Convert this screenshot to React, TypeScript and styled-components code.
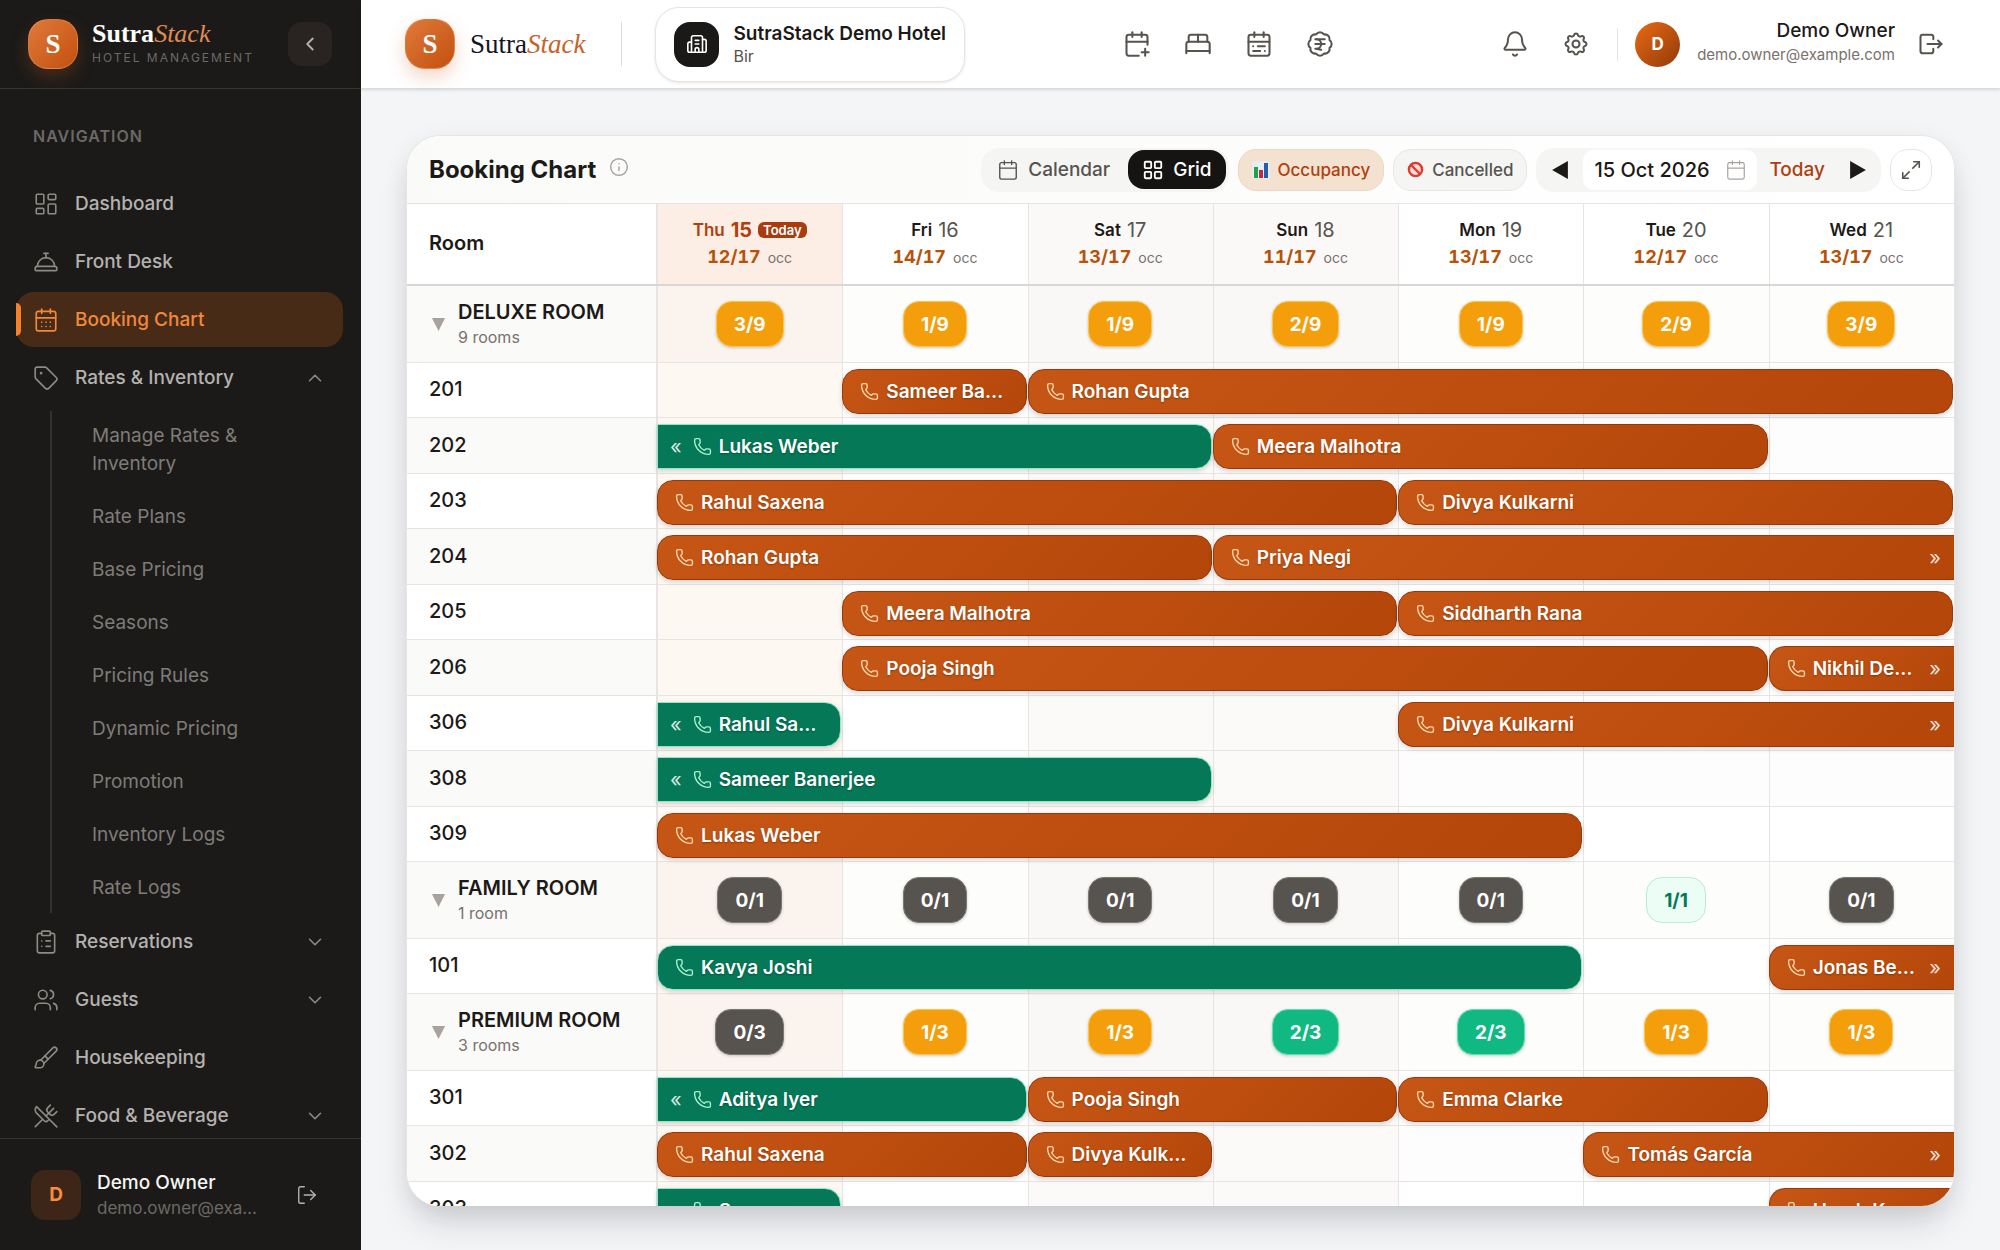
import React from "react";
import styled, { createGlobalStyle, css } from "styled-components";
import {
  BadgeIndianRupee,
  BedDouble,
  Bell,
  Brush,
  Building2,
  Calendar,
  CalendarDays,
  CalendarPlus,
  CalendarRange,
  ChevronDown,
  ChevronLeft,
  ChevronUp,
  ClipboardList,
  ConciergeBell,
  Info,
  LayoutDashboard,
  LayoutGrid,
  LogOut,
  Maximize2,
  Phone,
  Tag,
  Users,
  UtensilsCrossed,
} from "lucide-react";
import { TbLogout, TbSettings } from "react-icons/tb";

const color = {
  ink: "#1b1a18",
  text: "#1c1917",
  mid: "#57534e",
  soft: "#78716c",
  faint: "#a8a29e",
  line: "#e7e5e4",
  wash: "#f5f5f4",
  paper: "#fafaf9",
  rust: "#b0400f",
};

const GlobalStyle = createGlobalStyle`
  *, *::before, *::after { box-sizing: border-box; }
  body {
    margin: 0;
    font-family: Inter, "Liberation Sans", sans-serif;
    font-size: 20px;
    color: ${color.text};
    -webkit-font-smoothing: antialiased;
  }
  button, input { font: inherit; color: inherit; }
  button { border: 0; padding: 0; background: none; cursor: pointer; }
  a { color: inherit; text-decoration: none; }
  svg { flex: none; display: block; }
`;

const Shell = styled.div`
  display: flex;
  height: 100vh;
  overflow: hidden;
`;

/* ---------- sidebar ---------- */

const Sidebar = styled.aside`
  flex: none;
  width: 361px;
  display: flex;
  flex-direction: column;
  background: ${color.ink};
  color: #b4b2af;
`;

const SideHead = styled.div`
  flex: none;
  height: 89px;
  display: flex;
  align-items: center;
  gap: 14px;
  padding: 0 29px 0 28px;
  border-bottom: 1px solid #363532;
`;

const LogoMark = styled.span`
  flex: none;
  width: 50px;
  height: 50px;
  display: grid;
  place-items: center;
  border-radius: 20px;
  border: 1px solid rgba(255, 200, 150, 0.25);
  background: linear-gradient(135deg, #e07a3a, #c2500f);
  box-shadow: 0 8px 18px rgba(210, 90, 30, 0.25);
  color: #fff;
  font: bold 27px "Liberation Serif", serif;
`;

const Wordmark = styled.span<{ $dark?: boolean }>`
  font-family: "Liberation Serif", serif;
  font-size: ${(p) => (p.$dark ? 26 : 27)}px;
  font-weight: ${(p) => (p.$dark ? 700 : 400)};
  line-height: 28px;
  color: ${(p) => (p.$dark ? "#fff" : "#14141f")};
  em {
    font-weight: 400;
    color: ${(p) => (p.$dark ? "#e08a55" : "#c8622a")};
  }
`;

const BrandText = styled.div`
  flex: 1;
  display: flex;
  flex-direction: column;
  white-space: nowrap;
`;

const Tagline = styled.span`
  font-size: 12px;
  line-height: 20px;
  letter-spacing: 2px;
  color: #6b6966;
`;

const CollapseButton = styled.button`
  width: 44px;
  height: 44px;
  display: grid;
  place-items: center;
  border-radius: 14px;
  background: #292421;
  color: #b4b2af;
`;

const SideNav = styled.nav`
  flex: 1;
  min-height: 0;
  overflow: hidden;
  display: flex;
  flex-direction: column;
  gap: 3px;
  padding: 35px 18px 0 16px;
`;

const NavHeading = styled.h2`
  flex: none;
  margin: 0 0 25px;
  padding: 0 17px;
  font-size: 16px;
  line-height: 24px;
  font-weight: 600;
  letter-spacing: 1px;
  color: #6b6966;
`;

const NavLink = styled.a<{ $active?: boolean }>`
  flex: none;
  position: relative;
  height: 55px;
  display: flex;
  align-items: center;
  gap: 16px;
  padding: 0 17px;
  border-radius: 18px;
  font-size: 19px;
  font-weight: 500;
  svg {
    color: #8d8a86;
  }
  ${(p) =>
    p.$active &&
    css`
      background: #482b16;
      color: #f0883e;
      svg {
        color: #f0883e;
      }
      &::before {
        content: "";
        position: absolute;
        left: 0;
        top: 11px;
        width: 5px;
        height: 33px;
        border-radius: 0 5px 5px 0;
        background: #f5822a;
      }
    `}
`;

const NavText = styled.span`
  flex: 1;
`;

const SubNav = styled.div`
  flex: none;
  display: flex;
  flex-direction: column;
  gap: 3px;
  margin: 3px 0 -2px 34px;
  padding-left: 24px;
  border-left: 2px solid #33312f;
`;

const SubLink = styled.a`
  padding: 11px 60px 11px 16px;
  font-size: 19px;
  line-height: 28px;
  color: #7f7c78;
`;

const SideFoot = styled.div`
  flex: none;
  height: 112px;
  display: flex;
  align-items: center;
  gap: 16px;
  padding: 0 43px 0 31px;
  border-top: 1px solid #363532;
`;

const FootAvatar = styled.span`
  flex: none;
  width: 50px;
  height: 50px;
  display: grid;
  place-items: center;
  border-radius: 14px;
  background: #3d2517;
  color: #fb8c3c;
  font-size: 19px;
  font-weight: 700;
`;

const FootText = styled.div`
  flex: 1;
  min-width: 0;
  display: flex;
  flex-direction: column;
  color: #f5f5f4;
  font-size: 19px;
  font-weight: 500;
  line-height: 26px;
`;

const FootEmail = styled.span`
  max-width: 163px;
  font-size: 17px;
  line-height: 24px;
  font-weight: 400;
  color: #6b6966;
  overflow: hidden;
  text-overflow: ellipsis;
`;

const IconButton = styled.button`
  display: grid;
  place-items: center;
`;

/* ---------- top bar ---------- */

const Main = styled.main`
  flex: 1;
  min-width: 0;
  display: flex;
  flex-direction: column;
  background: linear-gradient(135deg, #f3f5f7, #f4f5f7);
`;

const TopBar = styled.header`
  flex: none;
  height: 89px;
  display: grid;
  grid-template-columns: auto 1fr auto;
  align-items: center;
  padding: 0 55px 0 44px;
  background: #fff;
  border-bottom: 1px solid #dcdcdc;
  box-shadow: 0 1px 3px rgba(0, 0, 0, 0.12);
`;

const TopGroup = styled.div`
  display: flex;
  align-items: center;
  white-space: nowrap;
`;

const TopBrand = styled.a`
  display: flex;
  align-items: center;
  gap: 15px;
`;

const Divider = styled.span`
  width: 1px;
  height: 44px;
  margin: 0 33px 0 36px;
  background: #dedcda;
`;

const PropertyButton = styled.button`
  height: 75px;
  display: flex;
  align-items: center;
  gap: 14px;
  padding: 0 18px;
  border: 1px solid ${color.line};
  border-radius: 24px;
  background: #fff;
  box-shadow: 0 1px 3px rgba(0, 0, 0, 0.1);
  text-align: left;
`;

const PropertyIcon = styled.span`
  width: 45px;
  height: 45px;
  display: grid;
  place-items: center;
  border-radius: 16px;
  background: #1a1918;
  color: #fff;
`;

const PropertyText = styled.span`
  display: flex;
  flex-direction: column;
  font-size: 19px;
  font-weight: 600;
  line-height: 24px;
  small {
    font-size: 16px;
    line-height: 20px;
    font-weight: 400;
    color: ${color.mid};
  }
`;

const QuickActions = styled.div`
  display: flex;
  justify-content: center;
  gap: 33px;
  padding-right: 10px;
  color: ${color.mid};
`;

const Utility = styled.div`
  display: flex;
  gap: 33px;
  color: ${color.mid};
  padding-right: 27px;
  border-right: 1px solid ${color.line};
  height: 33px;
  align-items: center;
`;

const UserAvatar = styled.span`
  width: 45px;
  height: 45px;
  margin: 0 17px;
  display: grid;
  place-items: center;
  border-radius: 50%;
  background: linear-gradient(135deg, #ea6a12, #8f3a0c);
  color: #fff;
  font-size: 17px;
  font-weight: 700;
`;

const UserText = styled.div`
  display: flex;
  flex-direction: column;
  margin-right: 22px;
  text-align: right;
  font-size: 19px;
  font-weight: 500;
  line-height: 26px;
  padding-bottom: 4px;
  small {
    font-size: 15px;
    line-height: 22px;
    font-weight: 400;
    color: ${color.soft};
  }
`;

/* ---------- chart card ---------- */

const Content = styled.div`
  flex: 1;
  min-height: 0;
  display: flex;
  padding: 46px 45px 44px;
`;

const Card = styled.section`
  flex: 1;
  min-width: 0;
  overflow: hidden;
  display: flex;
  flex-direction: column;
  border: 1px solid ${color.line};
  border-bottom: 0;
  border-radius: 34px;
  background: #fff;
  box-shadow: 0 22px 34px -8px rgba(30, 30, 40, 0.18), 0 4px 24px rgba(30, 30, 40, 0.06);
`;

const CardHead = styled.div`
  flex: none;
  height: 68px;
  display: flex;
  align-items: center;
  gap: 9px;
  padding: 0 22px;
  border-bottom: 1px solid ${color.line};
  background: linear-gradient(90deg, ${color.paper}, #fff);
`;

const Title = styled.h1`
  margin: 0;
  font-size: 24px;
  font-weight: 700;
  line-height: 32px;
`;

const TitleInfo = styled.span`
  flex: 1;
  padding: 0 0 6px 4px;
  color: ${color.faint};
`;

const Segment = styled.div`
  height: 44px;
  display: flex;
  align-items: center;
  gap: 4px;
  padding: 0 3px 0 2px;
  border-radius: 18px;
  background: ${color.wash};
`;

const SegmentButton = styled.button<{ $on?: boolean }>`
  height: 39px;
  display: flex;
  align-items: center;
  gap: 9px;
  padding: 0 14px;
  border-radius: 16px;
  font-weight: 500;
  font-size: 19px;
  color: ${(p) => (p.$on ? "#fff" : color.mid)};
  background: ${(p) => (p.$on ? "#151413" : "transparent")};
`;

const Chip = styled.button<{ $on?: boolean }>`
  height: 42px;
  display: flex;
  align-items: center;
  gap: 8px;
  padding: 0 13px;
  border-radius: 18px;
  border: 1px solid ${(p) => (p.$on ? "#ecd8c2" : color.line)};
  background: ${(p) => (p.$on ? "#f4e2d0" : color.wash)};
  color: ${(p) => (p.$on ? color.rust : color.mid)};
  font-size: 17px;
  font-weight: 500;
`;

const DateNav = styled.div`
  height: 44px;
  display: flex;
  align-items: center;
  border-radius: 18px;
  background: ${color.wash};
`;

const StepButton = styled.button`
  width: 47px;
  height: 40px;
  display: grid;
  place-items: center;
`;

const DateField = styled.label`
  height: 40px;
  display: flex;
  align-items: center;
  gap: 11px;
  padding: 0 10px 0 11px;
  border-radius: 10px;
  background: #fff;
  color: ${color.faint};
`;

const DateInput = styled.input`
  width: 120px;
  border: 0;
  padding: 0;
  outline: 0;
  background: none;
  font-size: 20px;
  font-weight: 500;
  color: ${color.text};
`;

const TodayButton = styled.button`
  height: 40px;
  padding: 0 9px 0 12px;
  font-size: 19px;
  font-weight: 500;
  color: ${color.rust};
`;

const ExpandButton = styled.button`
  width: 42px;
  height: 42px;
  display: grid;
  place-items: center;
  border: 1px solid ${color.line};
  border-radius: 18px;
  background: #fff;
  color: ${color.mid};
`;

/* ---------- grid ---------- */

const TableWrap = styled.div`
  flex: 1;
  min-height: 0;
  overflow: hidden;
`;

const Table = styled.table`
  width: 100%;
  table-layout: fixed;
  border-collapse: separate;
  border-spacing: 0;
`;

type Tone = "today" | "weekend" | "plain";

const headTone: Record<Tone, string> = { today: "#fceee4", weekend: "#faf9f8", plain: "#fff" };
const groupTone: Record<Tone, string> = { today: "#fbf3ee", weekend: "#f9f8f7", plain: "#fdfdfc" };
const roomTone: Record<Tone, string> = { today: "#fdf8f2", weekend: "#fbfaf9", plain: "#fff" };

const RoomHead = styled.th`
  width: 250px;
  height: 82px;
  padding: 0 22px 2px;
  text-align: left;
  font-size: 20px;
  font-weight: 600;
  border-bottom: 2px solid #d9d7d4;
  box-shadow: inset -1px 0 ${color.line};
`;

const DayHead = styled.th<{ $tone: Tone }>`
  padding: 1px 0 0;
  font-weight: 400;
  border-bottom: 2px solid #d9d7d4;
  background: ${(p) => headTone[p.$tone]};
  box-shadow: inset 1px 0 ${color.line};
`;

const DayLine = styled.div<{ $today?: boolean }>`
  display: flex;
  align-items: center;
  justify-content: center;
  gap: 6px;
  line-height: 26px;
  color: ${(p) => (p.$today ? color.rust : color.mid)};
  font-weight: ${(p) => (p.$today ? 700 : 400)};
  b {
    font-size: 17px;
    font-weight: 600;
    color: ${(p) => (p.$today ? color.rust : color.text)};
  }
`;

const TodayTag = styled.span`
  padding: 0 5px;
  border-radius: 6px;
  background: #a83c0f;
  color: #fff;
  font-size: 13px;
  line-height: 16px;
  font-weight: 600;
`;

const OccLine = styled.div`
  display: flex;
  align-items: baseline;
  justify-content: center;
  gap: 7px;
  line-height: 28px;
  font-size: 18px;
  font-weight: 700;
  font-variant-numeric: tabular-nums;
  color: #b45309;
  small {
    font-size: 14px;
    font-weight: 400;
    color: ${color.soft};
  }
`;

const GroupHead = styled.th`
  height: 77px;
  padding: 0 24px;
  text-align: left;
  background: ${color.paper};
  border-bottom: 1px solid ${color.line};
  box-shadow: inset -1px 0 ${color.line};
`;

const GroupToggle = styled.button`
  display: flex;
  align-items: center;
  gap: 12px;
  text-align: left;
`;

const GroupText = styled.span`
  display: flex;
  flex-direction: column;
  font-size: 20px;
  line-height: 26px;
  font-weight: 600;
  small {
    font-size: 16px;
    line-height: 24px;
    font-weight: 400;
    color: ${color.soft};
  }
`;

const GroupCell = styled.td<{ $tone: Tone }>`
  padding: 0;
  background: ${(p) => groupTone[p.$tone]};
  border-bottom: 1px solid ${color.line};
  box-shadow: inset 1px 0 ${color.line};
`;

type Level = "low" | "none" | "good" | "full";

const levels: Record<Level, { bg: string; edge: string; ink: string }> = {
  low: { bg: "#f59e0b", edge: "#fcc64a", ink: "#fff" },
  none: { bg: "#57534e", edge: "#7c7873", ink: "#fff" },
  good: { bg: "#10b981", edge: "#5fe0b0", ink: "#fff" },
  full: { bg: "#ecfdf5", edge: "#b5efd5", ink: "#047857" },
};

const Pill = styled.span<{ $level: Level }>`
  width: fit-content;
  height: 46px;
  display: flex;
  align-items: center;
  margin: 0 auto;
  padding: 0 17px;
  border-radius: 16px;
  border: 1px solid ${(p) => levels[p.$level].edge};
  background: ${(p) => levels[p.$level].bg};
  color: ${(p) => levels[p.$level].ink};
  box-shadow: 0 1px 3px rgba(0, 0, 0, ${(p) => (p.$level === "full" ? 0 : 0.2)});
  font-size: 19px;
  font-weight: 700;
`;

const RoomRow = styled.tr<{ $alt: boolean }>`
  height: ${(p) => (p.$alt ? 56 : 55)}px;
`;

const RoomCell = styled.th<{ $alt: boolean }>`
  padding: 0 22px 2px;
  text-align: left;
  font-size: 20px;
  font-weight: 500;
  background: ${(p) => (p.$alt ? color.paper : "#fff")};
  border-bottom: 1px solid ${color.line};
  box-shadow: inset -1px 0 ${color.line};
`;

const DayCell = styled.td<{ $tone: Tone; $alt: boolean }>`
  position: relative;
  padding: 0;
  background: ${(p) => (p.$alt && p.$tone === "plain" ? "#fdfdfd" : roomTone[p.$tone])};
  border-bottom: 1px solid ${color.line};
  box-shadow: inset 1px 0 ${color.line};
`;

type Look = { $span: number; $green: boolean; $fromBefore: boolean; $goesOn: boolean };

const Bar = styled.button<Look>`
  position: absolute;
  z-index: 1;
  top: 6px;
  left: 0;
  width: calc(${(p) => p.$span * 100}% - ${(p) => (p.$goesOn ? 0 : 1)}px);
  height: 45px;
  display: flex;
  align-items: center;
  gap: 7px;
  padding: 0 ${(p) => (p.$goesOn ? 13 : 18)}px 0 ${(p) => (p.$fromBefore ? 12 : 17)}px;
  border: 1px solid ${(p) => (p.$green ? "#8fe8c4" : "#96390c")};
  border-radius: ${(p) => {
    const l = p.$fromBefore ? 0 : 16;
    const r = p.$goesOn ? 0 : 16;
    return `${l}px ${r}px ${r}px ${l}px`;
  }};
  ${(p) => p.$goesOn && "border-right: 0;"}
  background: ${(p) =>
    p.$green ? "linear-gradient(135deg, #047857, #047857)" : "linear-gradient(135deg, #c65615, #b4460a)"};
  box-shadow: 0 2px 5px rgba(0, 0, 0, 0.16);
  color: ${(p) => (p.$green ? "#a7f3d0" : "#fed7aa")};
  text-align: left;
`;

const Guest = styled.span`
  flex: 1;
  min-width: 0;
  overflow: hidden;
  text-overflow: ellipsis;
  white-space: nowrap;
  font-size: 19px;
  line-height: 26px;
  font-weight: 600;
  color: #fff;
  text-shadow: 0 1px 2px rgba(0, 0, 0, 0.3);
`;

const More = styled.span<{ $before?: boolean }>`
  font-size: 20px;
  line-height: 24px;
  padding-right: ${(p) => (p.$before ? 4 : 0)}px;
  color: rgba(255, 255, 255, 0.85);
`;

/* ---------- data ---------- */

const days: { name: string; date: number; occ: string; tone: Tone }[] = [
  { name: "Thu", date: 15, occ: "12/17", tone: "today" },
  { name: "Fri", date: 16, occ: "14/17", tone: "plain" },
  { name: "Sat", date: 17, occ: "13/17", tone: "weekend" },
  { name: "Sun", date: 18, occ: "11/17", tone: "weekend" },
  { name: "Mon", date: 19, occ: "13/17", tone: "plain" },
  { name: "Tue", date: 20, occ: "12/17", tone: "plain" },
  { name: "Wed", date: 21, occ: "13/17", tone: "plain" },
];

type Booking = { guest: string; day: number; nights: number; staying?: boolean; before?: boolean; after?: boolean };
type Room = { no: string; bookings: Booking[] };
type Group = { name: string; count: string; free: [string, Level][]; rooms: Room[] };

const groups: Group[] = [
  {
    name: "DELUXE ROOM",
    count: "9 rooms",
    free: [["3/9", "low"], ["1/9", "low"], ["1/9", "low"], ["2/9", "low"], ["1/9", "low"], ["2/9", "low"], ["3/9", "low"]],
    rooms: [
      { no: "201", bookings: [{ guest: "Sameer Banerjee", day: 1, nights: 1 }, { guest: "Rohan Gupta", day: 2, nights: 5 }] },
      {
        no: "202",
        bookings: [
          { guest: "Lukas Weber", day: 0, nights: 3, staying: true, before: true },
          { guest: "Meera Malhotra", day: 3, nights: 3 },
        ],
      },
      { no: "203", bookings: [{ guest: "Rahul Saxena", day: 0, nights: 4 }, { guest: "Divya Kulkarni", day: 4, nights: 3 }] },
      { no: "204", bookings: [{ guest: "Rohan Gupta", day: 0, nights: 3 }, { guest: "Priya Negi", day: 3, nights: 4, after: true }] },
      { no: "205", bookings: [{ guest: "Meera Malhotra", day: 1, nights: 3 }, { guest: "Siddharth Rana", day: 4, nights: 3 }] },
      { no: "206", bookings: [{ guest: "Pooja Singh", day: 1, nights: 5 }, { guest: "Nikhil Deshpande", day: 6, nights: 1, after: true }] },
      {
        no: "306",
        bookings: [
          { guest: "Rahul Saxena", day: 0, nights: 1, staying: true, before: true },
          { guest: "Divya Kulkarni", day: 4, nights: 3, after: true },
        ],
      },
      { no: "308", bookings: [{ guest: "Sameer Banerjee", day: 0, nights: 3, staying: true, before: true }] },
      { no: "309", bookings: [{ guest: "Lukas Weber", day: 0, nights: 5 }] },
    ],
  },
  {
    name: "FAMILY ROOM",
    count: "1 room",
    free: [["0/1", "none"], ["0/1", "none"], ["0/1", "none"], ["0/1", "none"], ["0/1", "none"], ["1/1", "full"], ["0/1", "none"]],
    rooms: [
      {
        no: "101",
        bookings: [
          { guest: "Kavya Joshi", day: 0, nights: 5, staying: true },
          { guest: "Jonas Becker", day: 6, nights: 1, after: true },
        ],
      },
    ],
  },
  {
    name: "PREMIUM ROOM",
    count: "3 rooms",
    free: [["0/3", "none"], ["1/3", "low"], ["1/3", "low"], ["2/3", "good"], ["2/3", "good"], ["1/3", "low"], ["1/3", "low"]],
    rooms: [
      {
        no: "301",
        bookings: [
          { guest: "Aditya Iyer", day: 0, nights: 2, staying: true, before: true },
          { guest: "Pooja Singh", day: 2, nights: 2 },
          { guest: "Emma Clarke", day: 4, nights: 2 },
        ],
      },
      {
        no: "302",
        bookings: [
          { guest: "Rahul Saxena", day: 0, nights: 2 },
          { guest: "Divya Kulkarni", day: 2, nights: 1 },
          { guest: "Tomás García", day: 5, nights: 2, after: true },
        ],
      },
      {
        no: "303",
        bookings: [
          { guest: "Sameer Banerjee", day: 0, nights: 1, staying: true, before: true },
          { guest: "Harsh Kapoor", day: 6, nights: 1, after: true },
        ],
      },
    ],
  },
];

const rateLinks = [
  "Manage Rates & Inventory",
  "Rate Plans",
  "Base Pricing",
  "Seasons",
  "Pricing Rules",
  "Dynamic Pricing",
  "Promotion",
  "Inventory Logs",
  "Rate Logs",
];

/* ---------- drawings ---------- */

const BarsGlyph = () => (
  <svg width="18" height="18" viewBox="0 0 18 18" aria-hidden="true">
    <rect x="0.5" y="0.5" width="17" height="17" rx="1" fill="#e6eef5" />
    <rect x="2" y="6" width="4" height="11" fill="#1fa34a" />
    <rect x="7" y="9" width="4" height="8" fill="#c6264a" />
    <rect x="12" y="2" width="4" height="15" fill="#1f5fae" />
  </svg>
);

const BannedGlyph = () => (
  <svg width="17" height="17" viewBox="0 0 17 17" fill="none" stroke="#de3b2e" strokeWidth="2.4" aria-hidden="true">
    <circle cx="8.5" cy="8.5" r="6.6" fill="#f6dcd8" />
    <path d="M4 4l9 9" />
  </svg>
);

const Triangle = ({ points, size = 15, fill = "#1c1917" }: { points: string; size?: number; fill?: string }) => (
  <svg width={size} height={size} viewBox="0 0 14 16" aria-hidden="true">
    <polygon points={points} fill={fill} />
  </svg>
);

/* ---------- parts ---------- */

type IconType = React.ComponentType<{ size?: number; strokeWidth?: number }>;

const NavItem = ({ icon: Icon, text, active, fold }: { icon: IconType; text: string; active?: boolean; fold?: "up" | "down" }) => (
  <NavLink href="#" $active={active} aria-current={active ? "page" : undefined}>
    <Icon size={26} strokeWidth={1.5} />
    <NavText>{text}</NavText>
    {fold === "up" && <ChevronUp size={22} strokeWidth={1.75} />}
    {fold === "down" && <ChevronDown size={22} strokeWidth={1.75} />}
  </NavLink>
);

const BookingBar = ({ b }: { b: Booking }) => (
  <Bar $span={b.nights} $green={!!b.staying} $fromBefore={!!b.before} $goesOn={!!b.after}>
    {b.before && <More $before>«</More>}
    <Phone size={19} strokeWidth={1.75} />
    <Guest>{b.guest}</Guest>
    {b.after && <More>»</More>}
  </Bar>
);

export default function App() {
  return (
    <Shell>
      <GlobalStyle />
      <Sidebar>
        <SideHead>
          <LogoMark>S</LogoMark>
          <BrandText>
            <Wordmark $dark>
              Sutra<em>Stack</em>
            </Wordmark>
            <Tagline>HOTEL MANAGEMENT</Tagline>
          </BrandText>
          <CollapseButton aria-label="Collapse sidebar">
            <ChevronLeft size={22} strokeWidth={2} />
          </CollapseButton>
        </SideHead>
        <SideNav>
          <NavHeading>NAVIGATION</NavHeading>
          <NavItem icon={LayoutDashboard} text="Dashboard" />
          <NavItem icon={ConciergeBell} text="Front Desk" />
          <NavItem icon={CalendarDays} text="Booking Chart" active />
          <NavItem icon={Tag} text="Rates & Inventory" fold="up" />
          <SubNav>
            {rateLinks.map((t) => (
              <SubLink key={t} href="#">
                {t}
              </SubLink>
            ))}
          </SubNav>
          <NavItem icon={ClipboardList} text="Reservations" fold="down" />
          <NavItem icon={Users} text="Guests" fold="down" />
          <NavItem icon={Brush} text="Housekeeping" />
          <NavItem icon={UtensilsCrossed} text="Food & Beverage" fold="down" />
        </SideNav>
        <SideFoot>
          <FootAvatar>D</FootAvatar>
          <FootText>
            Demo Owner
            <FootEmail>demo.owner@example.com</FootEmail>
          </FootText>
          <IconButton aria-label="Log out">
            <LogOut size={22} strokeWidth={1.5} />
          </IconButton>
        </SideFoot>
      </Sidebar>

      <Main>
        <TopBar>
          <TopGroup>
            <TopBrand href="#">
              <LogoMark>S</LogoMark>
              <Wordmark>
                Sutra<em>Stack</em>
              </Wordmark>
            </TopBrand>
            <Divider />
            <PropertyButton>
              <PropertyIcon>
                <Building2 size={22} strokeWidth={1.75} />
              </PropertyIcon>
              <PropertyText>
                SutraStack Demo Hotel
                <small>Bir</small>
              </PropertyText>
            </PropertyButton>
          </TopGroup>
          <QuickActions>
            <IconButton aria-label="New booking">
              <CalendarPlus size={28} strokeWidth={1.75} />
            </IconButton>
            <IconButton aria-label="Rooms">
              <BedDouble size={28} strokeWidth={1.75} />
            </IconButton>
            <IconButton aria-label="Booking chart">
              <CalendarRange size={28} strokeWidth={1.75} />
            </IconButton>
            <IconButton aria-label="Rates">
              <BadgeIndianRupee size={28} strokeWidth={1.75} />
            </IconButton>
          </QuickActions>
          <TopGroup>
            <Utility>
              <IconButton aria-label="Notifications">
                <Bell size={28} strokeWidth={1.75} />
              </IconButton>
              <IconButton aria-label="Settings">
                <TbSettings size={28} strokeWidth={1.75} />
              </IconButton>
            </Utility>
            <UserAvatar>D</UserAvatar>
            <UserText>
              Demo Owner
              <small>demo.owner@example.com</small>
            </UserText>
            <IconButton aria-label="Log out">
              <TbLogout size={28} strokeWidth={1.75} color={color.mid} />
            </IconButton>
          </TopGroup>
        </TopBar>

        <Content>
          <Card>
            <CardHead>
              <Title>Booking Chart</Title>
              <TitleInfo>
                <Info size={20} strokeWidth={1.75} />
              </TitleInfo>
              <Segment>
                <SegmentButton>
                  <Calendar size={22} strokeWidth={1.5} />
                  Calendar
                </SegmentButton>
                <SegmentButton $on>
                  <LayoutGrid size={22} strokeWidth={2} />
                  Grid
                </SegmentButton>
              </Segment>
              <Chip $on>
                <BarsGlyph />
                Occupancy
              </Chip>
              <Chip>
                <BannedGlyph />
                Cancelled
              </Chip>
              <DateNav>
                <StepButton aria-label="Previous">
                  <Triangle points="14,0 14,16 0,8" size={18} />
                </StepButton>
                <DateField>
                  <DateInput aria-label="Start date" defaultValue="15 Oct 2026" />
                  <Calendar size={22} strokeWidth={1.25} />
                </DateField>
                <TodayButton>Today</TodayButton>
                <StepButton aria-label="Next">
                  <Triangle points="0,0 14,8 0,16" size={18} />
                </StepButton>
              </DateNav>
              <ExpandButton aria-label="Full screen">
                <Maximize2 size={22} strokeWidth={1.75} />
              </ExpandButton>
            </CardHead>
            <TableWrap>
              <Table>
                <thead>
                  <tr>
                    <RoomHead scope="col">Room</RoomHead>
                    {days.map((d) => (
                      <DayHead key={d.date} scope="col" $tone={d.tone}>
                        <DayLine $today={d.tone === "today"}>
                          <b>{d.name}</b>
                          {d.date}
                          {d.tone === "today" && <TodayTag>Today</TodayTag>}
                        </DayLine>
                        <OccLine>
                          {d.occ}
                          <small>occ</small>
                        </OccLine>
                      </DayHead>
                    ))}
                  </tr>
                </thead>
                {groups.map((g) => (
                  <tbody key={g.name}>
                    <tr>
                      <GroupHead scope="rowgroup">
                        <GroupToggle aria-expanded="true">
                          <Triangle points="0,1 14,1 7,15" fill={color.faint} />
                          <GroupText>
                            {g.name}
                            <small>{g.count}</small>
                          </GroupText>
                        </GroupToggle>
                      </GroupHead>
                      {g.free.map(([label, level], i) => (
                        <GroupCell key={i} $tone={days[i].tone}>
                          <Pill $level={level}>{label}</Pill>
                        </GroupCell>
                      ))}
                    </tr>
                    {g.rooms.map((r, n) => (
                      <RoomRow key={r.no} $alt={n % 2 === 1}>
                        <RoomCell scope="row" $alt={n % 2 === 1}>
                          {r.no}
                        </RoomCell>
                        {days.map((d, i) => {
                          const b = r.bookings.find((x) => x.day === i);
                          return (
                            <DayCell key={d.date} $tone={d.tone} $alt={n % 2 === 1}>
                              {b && <BookingBar b={b} />}
                            </DayCell>
                          );
                        })}
                      </RoomRow>
                    ))}
                  </tbody>
                ))}
              </Table>
            </TableWrap>
          </Card>
        </Content>
      </Main>
    </Shell>
  );
}
